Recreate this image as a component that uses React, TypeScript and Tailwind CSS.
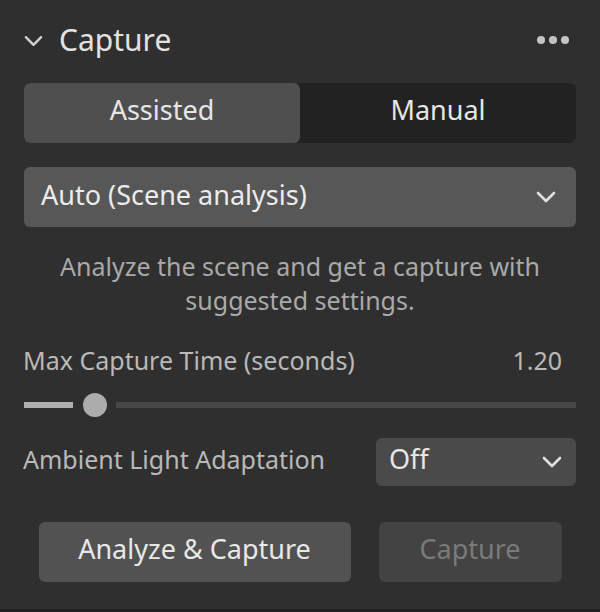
import { useState } from "react";

const ChevronDown = ({ className }: { className?: string }) => (
  <svg viewBox="0 0 20 12" className={className} fill="none">
    <path
      d="M2 2 L10 10 L18 2"
      stroke="currentColor"
      strokeWidth="2.6"
      strokeLinecap="round"
      strokeLinejoin="round"
    />
  </svg>
);

export default function App() {
  const [mode, setMode] = useState<"assisted" | "manual">("assisted");

  return (
    <div
      className="w-[600px] h-[612px] bg-[#2f2f2f] border-b-[3px] border-[#222222] px-6 flex flex-col text-[#e6e6e6]"
      style={{ fontFamily: '"Noto Sans", "Open Sans", sans-serif' }}
    >
      {/* header */}
      <div className="flex items-center justify-between h-[40px] mt-[20px]">
        <div className="flex items-center gap-[16px]">
          <ChevronDown className="w-[19px] h-[12px] text-[#d0d0d0] mt-[1px]" />
          <span className="text-[30px] leading-none text-[#e2e2e2] pb-[1px]">Capture</span>
        </div>
        <div className="flex items-center gap-[4px] mr-[7px]">
          <span className="w-[8px] h-[8px] rounded-full bg-[#c4c4c4]" />
          <span className="w-[8px] h-[8px] rounded-full bg-[#c4c4c4]" />
          <span className="w-[8px] h-[8px] rounded-full bg-[#c4c4c4]" />
        </div>
      </div>

      {/* segmented */}
      <div className="mt-[23px] h-[60px] flex rounded-[6px] bg-[#222222] overflow-hidden">
        <button
          onClick={() => setMode("assisted")}
          className={`w-[276px] h-full rounded-[6px] text-[27px] pb-[5px] ${
            mode === "assisted" ? "bg-[#4f4f4f]" : ""
          } text-[#e6e6e6]`}
        >
          Assisted
        </button>
        <button
          onClick={() => setMode("manual")}
          className={`flex-1 h-full rounded-[6px] text-[27px] pb-[5px] ${
            mode === "manual" ? "bg-[#4f4f4f]" : ""
          } text-[#e6e6e6]`}
        >
          Manual
        </button>
      </div>

      {/* dropdown */}
      <div className="mt-[24px] h-[60px] rounded-[6px] bg-[#575757] flex items-center justify-between pl-[17px] pr-[20px]">
        <span className="text-[27px] text-[#ececec] pb-[4px]">Auto (Scene analysis)</span>
        <ChevronDown className="w-[20px] h-[12px] text-[#e0e0e0]" />
      </div>

      {/* description */}
      <p className="mt-[22px] text-center text-[25px] leading-[34px] text-[#a9a9a9]">
        Analyze the scene and get a capture with
        <br />
        suggested settings.
      </p>

      {/* max capture time */}
      <div className="mt-[25px] flex items-center justify-between pr-[14px]">
        <span className="text-[25px] text-[#b9b9b9] -ml-[1px]">Max Capture Time (seconds)</span>
        <span className="text-[25px] text-[#b9b9b9]">1.20</span>
      </div>
      <div className="mt-[13px] h-[24px] flex items-center">
        <div className="w-[49px] h-[6px] bg-[#b0b0b0]" />
        <div className="ml-[10px] w-[24px] h-[24px] rounded-full bg-[#acacac]" />
        <div className="ml-[9px] flex-1 h-[6px] bg-[#474747]" />
      </div>

      {/* ambient light */}
      <div className="mt-[21px] flex items-center justify-between">
        <span className="text-[25px] text-[#b9b9b9] -ml-[1px] pb-[3px]">Ambient Light Adaptation</span>
        <div className="w-[200px] h-[48px] rounded-[6px] bg-[#4a4a4a] flex items-center justify-between pl-[13px] pr-[14px]">
          <span className="text-[27px] text-[#e6e6e6] pb-[5px]">Off</span>
          <ChevronDown className="w-[20px] h-[12px] text-[#e0e0e0]" />
        </div>
      </div>

      {/* actions */}
      <div className="mt-[36px] flex justify-center gap-[28px]">
        <button className="w-[312px] h-[60px] rounded-[6px] bg-[#525252] text-[27px] text-[#e8e8e8] pb-[4px]">
          Analyze &amp; Capture
        </button>
        <button className="w-[183px] h-[60px] rounded-[6px] bg-[#434343] text-[27px] text-[#7a7a7a] pb-[4px]">
          Capture
        </button>
      </div>
    </div>
  );
}
